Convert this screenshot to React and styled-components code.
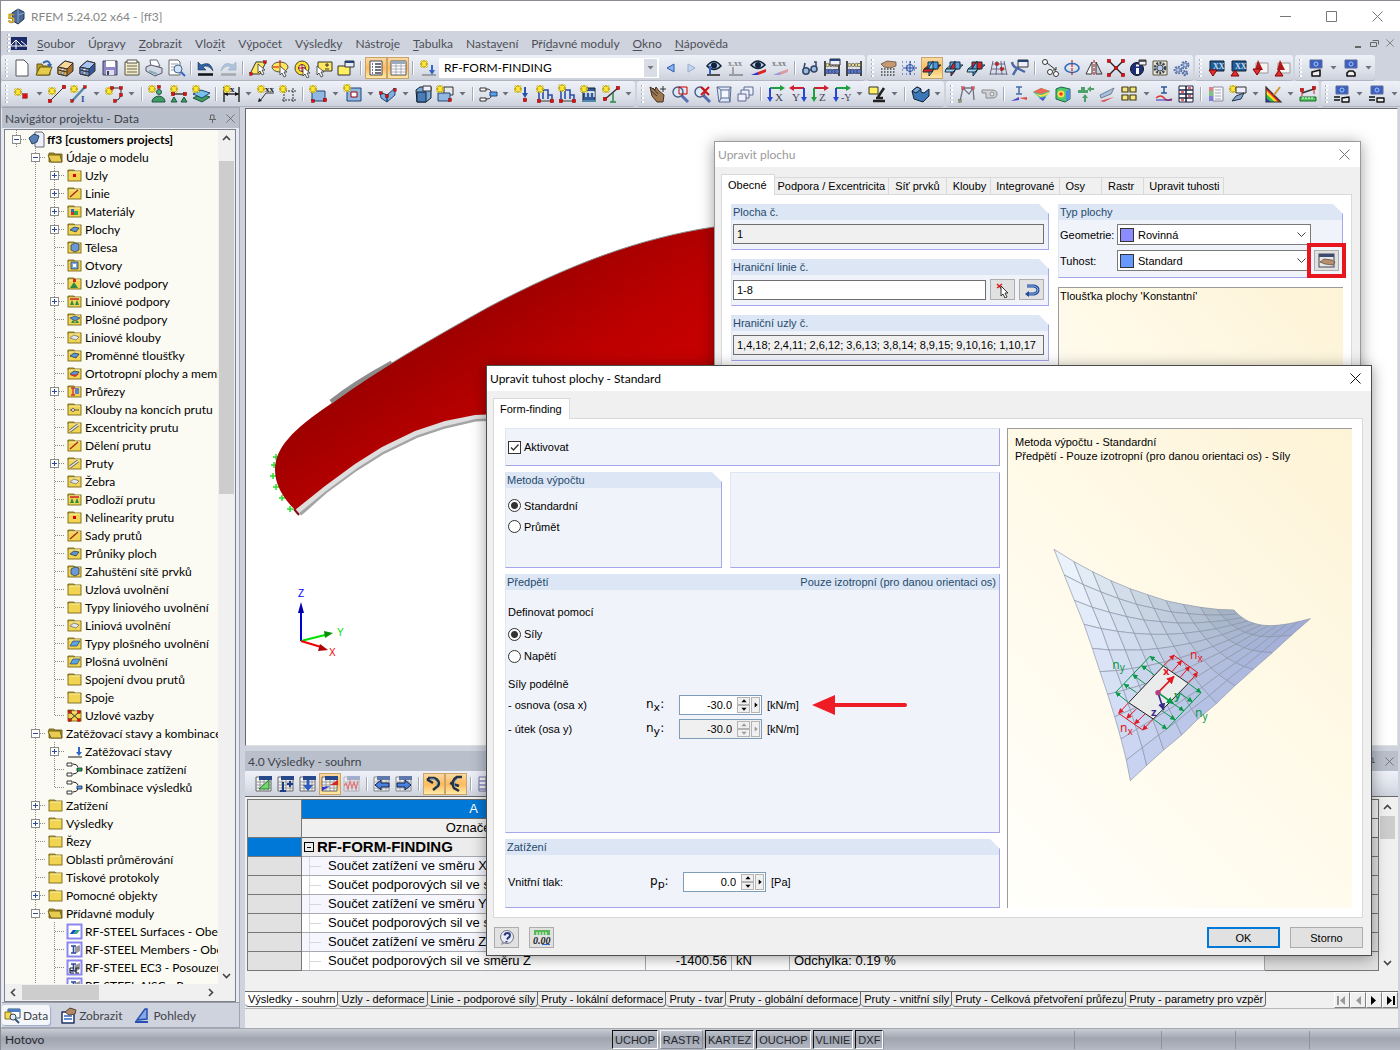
import React from "react";
import styled, { createGlobalStyle, css } from "styled-components";

const uiFont = 'Lato, "Open Sans", sans-serif';
const dlgFont = '"Liberation Sans", Arial, sans-serif';

const Global = createGlobalStyle`
  * { box-sizing: border-box; }
  body { margin: 0; background: #cfd3dd; overflow: hidden; }
  button, input, select { font: inherit; color: inherit; margin: 0; padding: 0; border: 0; background: none; border-radius: 0; }
  svg { display: block; flex: none; }
`;

/* ---------- drawings ---------- */

const Star = ({ x = 5, y = 5 }) => (
  <g transform={`translate(${x} ${y})`}>
    <path d="M0-4V4M-4 0H4M-3-3L3 3M-3 3L3-3" stroke="#8a7a10" strokeWidth="2" />
    <path d="M0-4V4M-4 0H4M-3-3L3 3M-3 3L3-3" stroke="#ffe838" strokeWidth="1.2" />
  </g>
);
const Node = ({ x, y, c = "#e01010", s = 3.4 }) => (
  <rect x={x - s / 2} y={y - s / 2} width={s} height={s} fill={c} stroke="#600" strokeWidth=".4" />
);
const Line = ({ d, c = "#333", w = 1, dash }) => (
  <path d={d} stroke={c} strokeWidth={w} fill="none" strokeDasharray={dash} />
);
const Poly = ({ d, f, s = "#333", w = 1 }) => <path d={d} fill={f} stroke={s} strokeWidth={w} strokeLinejoin="round" />;
const Txt = ({ x, y, c = "#222", s = 9, children }) => (
  <text x={x} y={y} fontSize={s} fill={c} fontFamily="Liberation Serif, serif" fontWeight="bold">{children}</text>
);
const Lens = ({ x = 8, y = 8 }) => (
  <>
    <Line d={`M${x + 3} ${y + 3}l7 7`} c="#5570b0" w={3} />
    <circle cx={x} cy={y} r="5" fill="#d8ecfc" stroke="#4a5a80" strokeWidth="1.4" />
  </>
);
const Cursor = ({ x = 11, y = 8 }) => (
  <path transform={`translate(${x} ${y})`} d="M0 0v9l2-2 2 4 2-1-2-4h3z" fill="#fff" stroke="#333" strokeWidth=".8" />
);
const Plane = ({ a, b, c }) => (
  <>
    <Poly d="M2 11l5-4h12l-5 4z" f={a} s="#134" />
    <Poly d="M6 4h10v7H6z" f={c} s="#134" />
    <Poly d="M7 9l4-6v10l-4 5z" f={b} s="#134" />
    <Poly d="M2 11h10l-3 3H1z" f={a} s="#134" />
  </>
);
const Gear = ({ x, y, r = 4, c = "#5570a8" }) => (
  <>
    <circle cx={x} cy={y} r={r} fill="none" stroke={c} strokeWidth={r * 0.5} strokeDasharray="2 1.2" />
    <circle cx={x} cy={y} r={r * 0.62} fill="#b8c8e8" stroke={c} />
  </>
);
const Loads = ({ x = 4 }) => (
  <>
    <Line d={`M${x} 6h9v5h4v4M${x} 6v9M${x + 4} 6v9M${x + 9} 10v5`} c="#2c4fa8" w={1.6} />
    <Line d={`M${x - 1} 17h15`} c="#777" w={1.6} />
    <Node x={x} y={17} /><Node x={x + 13} y={17} />
  </>
);
const Axis = ({ h, v, l, s = 11 }) => (
  <>
    <Line d="M4 4h12" c={h} w={2} /><path d="M14 1l5 3-5 3z" fill={h} />
    <Line d="M4 4v11" c={v} w={2} /><path d="M1 13l3 5 3-5z" fill={v} />
    <text x={9} y={17} fontSize={s} fill="#445" fontFamily="Liberation Serif, serif">{l}</text>
  </>
);
const Screen = ({ a }) => (
  <>
    <Poly d="M4 2h12v8H4z" f="#3f5fc0" s="#5a6a98" />
    <circle cx="10" cy="6" r="2" fill="none" stroke="#9cf" />
    {a === 0 && <Poly d="M6 18v-4l8-2v6z" f="#eee" s="#111" w={1.6} />}
    {a === 1 && <Poly d="M6 18v-3l2-2h4l2 2v3z" f="#eee" s="#111" w={1.6} />}
    {a === 2 && <><Line d="M2 13h6M2 16h6" c="#111" w={1.4} /><Poly d="M10 18v-4l7-1v5z" f="#eee" s="#111" w={1.4} /></>}
    {a === 3 && <><Line d="M2 13h6M2 16h6" c="#111" w={1.4} /><Poly d="M10 18v-4h7v4z" f="#eee" s="#111" w={1.4} /></>}
  </>
);
const GridBase = ({ o = 1 }) => (
  <g opacity={o}>
    <Poly d="M2 3h15v14H2z" f="#f4f4f4" s="#666" />
    <Line d="M2 8h15M2 11h15M2 14h15M6 6v11M10 6v11M14 6v11" c="#888" w={0.8} />
    <path d="M5 2h13v4H5z" fill="#28488c" />
  </g>
);
const Abacus = () => (
  <>
    <Line d="M3 3v15M17 3v15" c="#222" w={1.6} />
    <Line d="M3 7h14M3 13h14" c="#555" />
    {[5.5, 9, 12.5, 15].map((x) => <circle key={x} cx={x} cy="7" r="1.7" fill="#e8d898" stroke="#443" strokeWidth=".6" />)}
    {[5.5, 8.5, 12, 15].map((x) => <circle key={x} cx={x} cy="13.5" r="2.2" fill="#5878c8" stroke="#224" strokeWidth=".6" />)}
  </>
);
const Drawer = ({ f, d, t }) => (
  <>
    <Poly d="M2 9l7-6 8 2v8l-6 5-9-2z" f={d} />
    <Poly d="M2 9l7-6 8 2-6 6z" f={t} />
    <Poly d="M2 9l9 2v7l-9-2z" f={f} />
    <Line d="M2 12l9 2" />
    <path d="M5 10.500h3v2H5zM5 14h3v2H5z" fill="#fff" stroke="#333" strokeWidth=".6" />
  </>
);

const icons = {
  novy: <Poly d="M4 2h8l4 4v12H4z" f="#fff" s="#555" />,
  otevrit: <><Poly d="M3 17V6h5l1 2h7v9z" f="#b89a28" s="#6b5a10" /><Poly d="M2 17l4-8h12l-3 8z" f="#e4cc4c" s="#6b5a10" /><Line d="M9 5q5-4 7 1" c="#3a66b0" w={2} /><path d="M13 6h5l-2 4z" fill="#3a66b0" /></>,
  projekty: <Drawer f="#e8b050" d="#a87028" t="#f8d898" />,
  bloky: <Drawer f="#6c90dc" d="#34549c" t="#a8c4f4" />,
  ulozit: <><Poly d="M3 3h14v14H3z" f="#8f88c8" s="#445" /><path d="M6 3h9v6H6z" fill="#fff" /><path d="M6 12h8v5H6z" fill="#dde" /><path d="M7 13h2v4H7z" fill="#445" /></>,
  protokol: <><Poly d="M3 4h14v13H3z" f="#f4ecc8" s="#554" /><Poly d="M5 2h10v3H5z" f="#fff" s="#554" /><Line d="M5 8h10M5 11h10M5 14h10" c="#665" /></>,
  tisk: <><Poly d="M6 2h7l3 6-9 1z" f="#fff" s="#667" /><Poly d="M2 9l5-2 11 3v5l-7 3-9-5z" f="#d4d8e4" s="#556" /><Line d="M5 13l8 3" c="#8ab" w={2} /></>,
  nahled: <><Poly d="M3 2h9l2 2v13H3z" f="#fff" s="#666" /><Line d="M5 6h7M5 9h5M5 12h5" c="#99a" /><circle cx="12" cy="11" r="4" fill="#cfe4fa" stroke="#468" /><Line d="M15 14l4 4" c="#36c" w={2} /></>,
  zpet: <><path d="M2 4v8h8L7 9q5-3 10 4Q15 2 5 7z" fill="#2c62a8" stroke="#123" strokeWidth=".5" /><Line d="M2 16.500h15" c="#111" w={2.5} /></>,
  vpred: <g opacity=".6"><path d="M18 4v8h-8l3-3Q8 6 3 13 5 2 15 7z" fill="#8ab0d8" stroke="#678" strokeWidth=".5" /><Line d="M3 16.500h15" c="#888" w={2.5} /></g>,
  vyberRovina: <><Poly d="M2 16L8 4h10l-6 12z" f="#ffe860" /><Node x={3} y={16} s={2.500} /><Node x={17} y={4} s={2.500} /><Cursor x={10} y={6} /></>,
  vyberElipsa: <><ellipse cx="10" cy="9" rx="8" ry="5" fill="#ffe860" stroke="#554" /><Line d="M3 9h6M10 2v6" c="#d00" /><Cursor x={10} y={8} /></>,
  vyberPrstenec: <><circle cx="10" cy="10" r="7" fill="#ffe030" stroke="#443" /><circle cx="10" cy="10" r="3.500" fill="#f6f6ee" stroke="#443" /><Line d="M10 6v8M6 10h8" c="#d00" /><Cursor x={11} y={9} /></>,
  vyberPlus: <><Poly d="M4 4h14v9H4z" f="#ffe860" /><Line d="M11 7h4M13 5v4M11 11h4" /><Cursor x={3} y={8} /></>,
  poznamka: <><Poly d="M2 8h12v9H2z" f="#fff060" /><Poly d="M9 3h9v6H9z" f="#e8ecf8" /><Line d="M9 4h9" c="#247" w={2} /></>,
  navigator: <><Poly d="M4 3h12v14H4z" f="#fff" s="#445" /><Line d="M6 6h1M6 9h1M6 12h1M6 15h1M9 6h6M9 9h6M9 12h6M9 15h6" c="#445" w={1.3} /></>,
  tabulky: <><Poly d="M3 3h15v14H3z" f="#fff" s="#556" /><path d="M3 3h15v3H3z" fill="#9ab" /><Line d="M3 8h15M3 11h15M3 14h15M8 6v11M13 6v11" c="#99a" w={0.8} /></>,
  zatStav: <><Star x={6} y={6} /><Line d="M14 7v8" c="#36c" w={2} /><path d="M11 12l3 5 3-5z" fill="#36c" /><Line d="M4 17h14" c="#888" w={1.4} /></>,
  predchozi: <Poly d="M14 6v8L7 10z" f="#88b4f0" s="#2c5cb0" />,
  dalsi: <g opacity=".65"><Poly d="M6 6v8l7-4z" f="#b8d0f0" s="#6c90c8" /></g>,
  okoZatizeni: <><path d="M3 8q7-9 14 0-7 7-14 0z" fill="#bcd" stroke="#123" strokeWidth="1.5" /><circle cx="10" cy="7.500" r="3" fill="#124" /><Line d="M6 8v8" c="#36c" w={2} /><Line d="M3 17h13" c="#222" w={1.5} /></>,
  hodnoty: <g opacity=".5"><Txt x={2} y={8} s={8}>x.xx</Txt><Line d="M7 9v7M3 17h14" w={1.4} /></g>,
  okoPrubeh: <><path d="M3 7q7-8 14 0-7 7-14 0z" fill="#bcd" stroke="#123" strokeWidth="1.5" /><circle cx="10" cy="7" r="3" fill="#124" /><path d="M3 17l7-3v3z" fill="#33c" /><path d="M10 17v-3l8-3v3z" fill="#d22" /></>,
  hodPrubeh: <g opacity=".55"><Txt x={2} y={8} s={8}>x.xx</Txt><path d="M3 17l7-3v3z" fill="#66c" /><path d="M10 17v-3l8-3v3z" fill="#d66" /></g>,
  bryle: <><circle cx="6" cy="13" r="3.200" fill="#9bd" stroke="#346" strokeWidth="1.500" /><circle cx="14" cy="11" r="3" fill="#9bd" stroke="#346" strokeWidth="1.500" /><Line d="M4 10L5 5M16 9V4h-2M9 12h2" c="#346" w={1.500} /></>,
  pocitadloDlg: <><Abacus /><Poly d="M8 1h10v6H8z" f="#eef" /><Line d="M8 2h10" c="#247" w={2} /></>,
  pocitadlo: <Abacus />,
  ruka: <><path d="M3 6l6-3 9 1v4l-6 2-6-1z" fill="#c89870" stroke="#543" strokeWidth=".7" /><Line d="M3 11h15M3 14h15M3 17h15" w={1.400} dash="1.500 1.500" c="#444" /></>,
  rastr: <><Line d="M2 4h16M2 8h16M2 12h16M2 16h16" c="#2a4a9a" w={1.200} dash="1 3" /><circle cx="10" cy="10" r="3.500" fill="#c8d8f8" stroke="#2a4a9a" /><Line d="M10 3v14M3 10h14" c="#2a4a9a" /></>,
  rovinaXY: <Plane a="#e02020" b="#88c0ec" c="#4c94d8" />,
  rovinaYZ: <Plane a="#a8d0f0" b="#e02020" c="#5c9cd8" />,
  rovinaXZ: <Plane a="#a8d0f0" b="#5c9cd8" c="#e02020" />,
  pudorys: <><Line d="M5 3L2 17M9 3l-1 14M13 3l1 14M16 3l3 14M4 6h13M3 11h14M2 16h17" c="#668" /><Node x={9} y={6} s={2.500} /><Node x={14} y={11} s={2.500} /></>,
  nastrojDlg: <><Line d="M2 4q1 5 5 6l-4 7M7 10l8 4" c="#4a6aa8" w={2.500} /><Poly d="M8 2h10v7H8z" f="#eef" /><Line d="M8 3h10" c="#247" w={2} /></>,
  posun: <><circle cx="5" cy="4" r="2.500" fill="#fff" stroke="#333" /><circle cx="10" cy="14" r="2.500" fill="#fff" stroke="#333" /><circle cx="16" cy="16" r="2.500" fill="#fff" stroke="#333" /><Line d="M7 5l9 7M13 12h3V9" /></>,
  rotace: <><ellipse cx="10" cy="10" rx="7" ry="4.500" fill="none" stroke="#2c6cb8" strokeWidth="1.600" /><Line d="M10 2v16" c="#c00" dash="3 1" /></>,
  zrcadlo: <><Poly d="M8 4v12H2z" f="#fff" /><Poly d="M12 4v12h6z" f="#ccd" /><Line d="M10 2v16" c="#c00" dash="3 1" /></>,
  spojit: <><Line d="M3 3l14 14M17 3L3 17" c="#222" w={1.400} /><Node x={3} y={3} /><Node x={17} y={3} /><Node x={3} y={17} /><Node x={17} y={17} /><Node x={10} y={10} /></>,
  info: <><circle cx="9" cy="11" r="6.500" fill="#1c3078" stroke="#112" /><path d="M8 10h3v6H8zM8 6.500h3v2H8z" fill="#fff" /><Poly d="M11 2h7v5h-7z" f="#eef" /><Line d="M11 3h7" w={1.500} /></>,
  ozubene: <><Poly d="M3 3h14v14H3z" f="#f0e6d0" s="#554" /><Gear x={10} y={10} r={5} c="#345" /></>,
  kolecka: <><Gear x={6} y={12} r={3.500} /><Gear x={13} y={7} r={3.500} /><Gear x={13} y={15} r={2.500} /></>,
  modulDolu: <><Poly d="M4 3h14v10H4z" f="#1e5c98" s="#123" /><Txt x={7} y={11} s={8} c="#cde">XX</Txt><path d="M3 12h8l-4 6z" fill="#e03030" stroke="#800" /></>,
  modulNahoru: <><Poly d="M4 3h14v10H4z" f="#1e5c98" s="#123" /><Txt x={7} y={11} s={8} c="#cde">XX</Txt><path d="M3 18h8l-4-6z" fill="#e03030" stroke="#800" /></>,
  stranaDolu: <><Poly d="M6 5h12v10H6z" f="#f4f4f4" s="#999" /><path d="M8 2l5 10H5z" fill="#b01818" /><path d="M3 11h8l-4 6z" fill="#e03030" stroke="#800" /></>,
  stranaNahoru: <><Poly d="M6 5h12v10H6z" f="#f4f4f4" s="#999" /><path d="M8 2l5 10H5z" fill="#b01818" /><path d="M3 18h8l-4-6z" fill="#e03030" stroke="#800" /></>,
  obr0: <Screen a={0} />, obr1: <Screen a={1} />, obr2: <Screen a={2} />, obr3: <Screen a={3} />,
  uzel: <><Star x={6} y={8} /><Node x={13} y={12} s={4.500} /></>,
  linie: <><Line d="M3 17L17 3" /><Star x={5} y={7} /><Node x={3} y={17} /><Node x={17} y={3} /></>,
  prut: <><Line d="M3 17L16 3" c="#58a" w={2.500} /><Star x={5} y={5} /><Txt x={12} y={18} s={9} c="#2a4a9a">I</Txt><Node x={3} y={17} s={2.500} /><Node x={16} y={3} s={2.500} /></>,
  lomena: <><Line d="M8 4h9v7q-1 5-6 6" /><Star x={5} y={7} /><Node x={8} y={4} s={3} /><Node x={17} y={4} s={3} /><Node x={17} y={11} s={3} /><Node x={11} y={17} s={3} /></>,
  podpora: <><Star x={5} y={5} /><circle cx="12" cy="8" r="2.500" fill="#5a8" stroke="#254" /><Node x={12} y={3} s={3} /><path d="M5 18q0-5 7-6 6 1 6 6z" fill="#3f9c60" stroke="#254" /></>,
  podporaLinie: <><Star x={5} y={5} /><Line d="M3 10h14" w={1.400} /><Node x={4} y={10} /><Node x={16} y={10} /><path d="M2 18l3-5 3 5zM12 18l3-5 3 5z" fill="#3f9c60" stroke="#254" /></>,
  podporaPlocha: <><Poly d="M2 14l8-4 9 3-8 5z" f="#3f9c60" s="#254" /><Poly d="M2 10l8-4 9 3-8 5z" f="#78c0ec" s="#247" /><Star x={5} y={5} /></>,
  kota: <><Line d="M3 3v15M18 3v15M3 10h15" w={1.500} /><path d="M3 10l4-2v4zM18 10l-4-2v4z" fill="#111" /><Star x={6} y={5} /><Txt x={9} y={8}>x</Txt></>,
  kotaText: <><Star x={5} y={5} /><Txt x={9} y={8}>xx</Txt><Line d="M18 9H10L4 17" /><path d="M2 18l1-4 3 3z" fill="#222" /></>,
  ramecek: <><Line d="M4 7h14M4 16h14M6 4v14M15 4v14" dash="2 1" /><Star x={5} y={5} /></>,
  plocha: <><Poly d="M4 7h13v10H4z" f="#90b8e0" s="#247" /><Star x={5} y={5} /><Node x={17} y={16} /><Node x={5} y={17} s={3} /></>,
  otvor: <><Poly d="M4 4h14v13H4z" f="#90b8e0" s="#247" /><Poly d="M8 8h6v5H8z" f="#fff" s="#900" /><Star x={4} y={4} /></>,
  kridlo: <><Poly d="M2 8l7 3v7l-6-4zM9 11l8-7v7l-8 7z" f="#80b0dc" s="#247" /><Node x={9} y={12} s={3} /><Node x={3} y={9} s={2.500} /><Node x={17} y={6} s={2.500} /></>,
  teleso: <><Poly d="M3 6l4-3h11v11l-5 4H4z" f="#78a8d8" s="#123" /><Poly d="M4 8h9v10H4z" f="#4c7cb8" s="#123" /><Poly d="M10 2h8v5h-8z" f="#eef" /></>,
  telesa: <><Poly d="M9 3h9v8H9z" f="#e8e8e8" /><Poly d="M3 9h12v8H3z" f="#90b8e0" s="#247" /><Star x={5} y={5} /><Node x={15} y={16} s={3} /></>,
  kombinace: <><Poly d="M2 4h6v3H2zM2 14h6v3H2z" f="#fff" /><Line d="M8 5q5 0 5 3M8 15q5 0 5-3" /><Poly d="M12 8h7v4h-7z" f="#58a0f0" s="#247" /></>,
  zatUzel: <><Star x={5} y={5} /><Line d="M12 3v9" c="#2c4fa8" w={2} /><path d="M9 9l3 5 3-5z" fill="#2c4fa8" /><Node x={12} y={16} /></>,
  zatLinie: <><Loads /><Star x={5} y={5} /></>,
  zatPrut: <><Loads /><Star x={5} y={4} /></>,
  zatPlocha: <><Poly d="M4 4h12v13H4z" f="#345a9a" s="#123" /><Line d="M6 8h9v5M7 8v5M11 8v5" c="#fff" w={1.300} /><Star x={5} y={5} /><path d="M3 16h14v2H3z" fill="#58a" /></>,
  zatVolne: <><Line d="M3 16L17 4" w={1.500} /><Star x={5} y={5} /><Node x={17} y={4} /><Node x={4} y={15} /><Line d="M12 9v9M9 18h6" c="#2a8a40" w={1.500} /></>,
  posunPohledu: <><path d="M2 3l5 3 1-3 3 4 5 4-1 7-6 0-5-6z" fill="#a07850" stroke="#432" /><Line d="M15 2v6M12 5h6M5 4l5 6M3 7l6 5" /></>,
  zoomOkno: <><Lens /><Poly d="M9 3h8v7H9z" f="none" s="#c00" /></>,
  zoomX: <><Lens /><Line d="M9 3l8 8M17 3L9 11" c="#d01010" w={2} /></>,
  krychle: <><Poly d="M3 3h14l-1 15H5z" f="#dfe8f6" s="#5a6a90" /><Poly d="M7 6h8v8H7z" f="#f4f8ff" s="#5a6a90" /><Line d="M3 3l4 3M17 3l-2 3M5 18l2-4M16 18l-1-4" c="#5a6a90" /></>,
  krychle2: <><Poly d="M8 3h9v8H8z" f="#eef" s="#5a6a90" /><Poly d="M5 6h8v8H5z" f="#eef" s="#5a6a90" /><Poly d="M2 10h8v7H2z" f="#eef" s="#5a6a90" /></>,
  osaX: <Axis h="#20a040" v="#2848d0" l="X" />,
  osaY: <><Line d="M4 4h12" c="#d02030" w={2} /><path d="M6 1L1 4l5 3z" fill="#d02030" /><Line d="M16 4v11" c="#2848d0" w={2} /><path d="M13 13l3 5 3-5z" fill="#2848d0" /><text x={4} y={17} fontSize={11} fill="#445" fontFamily="Liberation Serif, serif">Y</text></>,
  osaZ: <Axis h="#d02030" v="#20a040" l="Z" />, osaMY: <Axis h="#20a040" v="#2848d0" l="-Y" s={10} />,
  pohled: <><Poly d="M2 3h9v7H2z" f="#fff060" /><Line d="M17 4l-6 9M6 17h12M9 14h7" c="#222" w={2.500} /></>,
  izo: <><Poly d="M2 7l5-4 4 2v3l3 1 5-4v7l-6 6-9-3z" f="#3c78b8" s="#123" /><Poly d="M2 7l5-4 4 2-5 4z" f="#78a8dc" s="#123" /></>,
  ram: <g opacity=".7"><Line d="M3 17L6 4h10l1 12M6 4l6 6 4-6" c="#445" w={1.300} /><Node x={6} y={4} s={2.500} /><Node x={16} y={4} s={2.500} /><Node x={3} y={17} s={2.500} c="#3a3" /></g>,
  kamera: <g opacity=".7"><Poly d="M3 6h10q5 0 5 4t-5 4H7V9H3z" f="#ccc" s="#666" /><circle cx="13" cy="10" r="2" fill="#eee" stroke="#666" /></g>,
  profilPrubeh: <g opacity=".85"><Line d="M7 3h6M10 3v7M7 10h6" c="#2a5a9a" w={1.500} /><path d="M2 17l8-4v3z" fill="#33b" /><path d="M10 14l8-1v3z" fill="#d33" /></g>,
  plochaBarvy: <><path d="M2 8l8-4 9 3-7 10z" fill="#4c8" /><path d="M2 8l8-4 9 3-9 3z" fill="#e65" /><path d="M4 10l7 1 7-3-2 3-6 2z" fill="#fd4" /><path d="M8 14l7-1-3 4z" fill="#55d" /></>,
  telesoBarvy: <><Poly d="M3 5l5-2 9 2v10l-5 3-9-3z" f="#4cc870" s="#264" /><circle cx="8" cy="10" r="3.500" fill="#fd4" /><circle cx="8" cy="10" r="1.700" fill="#e33" /><path d="M13 7l4-2v10l-4 2z" fill="#4a8ae0" /></>,
  reakce: <g opacity=".8"><path d="M6 3h4v3h3v3H3V6h3z" fill="#2a9048" /><path d="M10 10l3 4h-2v4H9v-4H7z" fill="#2a9048" /><path d="M12 5l4-3v2h3v2h-3v2z" fill="#2a9048" /></g>,
  prubehy: <g opacity=".8"><path d="M3 11l14-7-3 6-10 4z" fill="#9ab8e0" stroke="#567" /><path d="M3 17l14-4-10 5z" fill="#d33" /></g>,
  dlazdice: <>{[[3, 3], [11, 3], [3, 11], [11, 11]].map(([x, y]) => <Poly key={`${x}${y}`} d={`M${x} ${y}h6v5h-6z`} f="#f4e680" s="#443a10" w={1.200} />)}</>,
  profilVlna: <><Line d="M7 3h6M10 3v6M7 9h6" c="#2a5a9a" w={1.500} /><Line d="M2 14q5-4 8 0t8 1" c="#d33" w={1.500} /><Line d="M2 16h16" c="#33b" /></>,
  tabHodnot: <><Poly d="M3 2h14v16H3z" f="#fff" s="#224" /><Line d="M3 6h14M3 10h14M3 14h14M10 2v16" c="#224" w={1.600} /><Line d="M5 8h3M12 4h3M12 12h3M5 16h3" c="#d33" w={1.500} /></>,
  legenda: <g opacity=".8"><Poly d="M7 3h10v14H7z" f="#fff" s="#778" /><Line d="M9 6h6M9 9h6M9 12h6M9 15h6" c="#99a" /><path d="M3 3h4v4H3z" fill="#d66" /><path d="M3 7h4v5H3z" fill="#6b6" /><path d="M3 12h4v5H3z" fill="#66d" /></g>,
  pero: <><Star x={5} y={5} /><Poly d="M8 3h10v6H8z" f="#eef" /><Poly d="M4 17l4-5 8-3-3 6z" f="#88a8d0" s="#234" /></>,
  duha: <><path d="M3 3v15h15z" fill="#e22" /><path d="M3 6v12h12z" fill="#fd2" /><path d="M3 10v8h9z" fill="#3b4" /><path d="M3 14v4h5z" fill="#33d" /><Line d="M3 3v15h15z" w={1.200} /><Line d="M17 3l-6 8" c="#c93" w={2} /></>,
  pravitko: <><Line d="M4 9l12-4" w={1.400} /><Node x={4} y={6} /><Node x={16} y={4} /><Line d="M4 6v6M16 4v6" c="#c22" /><Poly d="M2 13h16v4H2z" f="#50c860" s="#1a6a28" /><Line d="M5 13v2M8 13v2M11 13v2M14 13v2" c="#fff" /></>,
  tUprava: <><GridBase /><Poly d="M5 15L15 6v9z" f="#70d870" s="#2a7a30" /></>,
  tRadky: <><GridBase /><Line d="M7 8v8M11 10h6M14 7v6M4 17h6" c="#1c3c88" w={2} /></>,
  tDolu: <><GridBase /><Line d="M10 6v7" c="#2c5cc0" w={3} /><path d="M5 11h10l-5 6z" fill="#2c5cc0" /></>,
  tPrubeh: <><GridBase /><path d="M2 17v-4l8-1z" fill="#33c" /><path d="M10 11l8-5v5z" fill="#d22" /></>,
  tKmity: <g opacity=".6"><GridBase o={0.6} /><Line d="M2 12l2-3 2 6 2-8 2 7 2-6 2 7 2-8" c="#d33" w={1.200} /></g>,
  tVlevo: <><GridBase o={0.7} /><path d="M3 11l6-5v3h8v4H9v3z" fill="#4c80e0" stroke="#124" /></>,
  tVpravo: <><GridBase o={0.7} /><path d="M17 11l-6-5v3H3v4h8v3z" fill="#4c80e0" stroke="#124" /></>,
  tOblouk1: <><Line d="M4 4h6q7 3 4 8l-5 4M4 4v2l5 3" c="#234" w={2.600} /><Line d="M6 5h4q5 3 2 7" c="#78a8e0" /></>,
  tOblouk2: <><Line d="M16 3h-5Q4 7 8 14l5 3M4 9l9 3" c="#234" w={2.600} /><Line d="M12 4Q7 8 9 13" c="#78a8e0" /></>,
  tSloupce: <g opacity=".7"><Poly d="M3 3h14v14H3z" f="#fff" s="#448" /><Line d="M3 7h14M3 11h14M3 15h14M10 3v14" c="#66a" w={1.400} /></g>,
};

const Icon = ({ name, size = 20 }) => (
  <svg width={size} height={size} viewBox="0 0 20 20" fill="none" aria-hidden="true">{icons[name]}</svg>
);

const Cross = ({ size = 11, color = "#111" }) => (
  <svg width={size} height={size} viewBox="0 0 11 11" aria-hidden="true"><path d="M.5.5l10 10M10.500.5l-10 10" stroke={color} /></svg>
);
const Pin = () => (
  <svg width="9" height="9" viewBox="0 0 9 9" aria-hidden="true"><path d="M2.500 1v4M6 1v4M2.500 1H6M1 5.500h7M4.500 6v3" stroke="#666" fill="none" /></svg>
);
const turn = { down: 0, left: 90, up: 180, right: 270 };
const Chevron = ({ dir = "down", color = "#444", size = 9 }) => (
  <svg width={size} height={size} viewBox="0 0 9 9" aria-hidden="true">
    <path transform={`rotate(${turn[dir]} 4.500 4.500)`} d="M1 3l3.500 3.500L8 3" stroke={color} strokeWidth="1.600" fill="none" />
  </svg>
);
const ThinChevron = () => (
  <svg width="9" height="9" viewBox="0 0 9 9" aria-hidden="true"><path d="M.5 2.500l4 4 4-4" stroke="#444" fill="none" /></svg>
);
const Tri = ({ dir = "down", color = "#000", size = 7 }) => (
  <svg width={size} height={size} viewBox="0 0 7 7" aria-hidden="true">
    <path transform={`rotate(${turn[dir]} 3.500 3.500)`} d="M.5 2h6l-3 3.500z" fill={color} />
  </svg>
);
const SheetArrow = ({ back, end, color = "#000" }) => (
  <svg width="10" height="9" viewBox="0 0 10 9" aria-hidden="true">
    <g transform={back ? "matrix(-1 0 0 1 10 0)" : undefined} fill={color}>
      <path d="M2 0l5 4.500L2 9z" />{end && <path d="M8 0h2v9H8z" />}
    </g>
  </svg>
);

/* ---------- frame ---------- */

const Frame = styled.div`
  position: relative;
  display: flex;
  flex-direction: column;
  height: 100vh;
  border-left: 1px solid #8b8b93;
  background: #cfd3dd;
  font-family: ${uiFont};
  font-size: 12px;
  color: #3c3f46;
  overflow: hidden;
`;
const TitleBar = styled.header`
  display: flex;
  align-items: center;
  flex: 0 0 31px;
  padding-left: 7px;
  background: #fff;
  border-top: 1px solid #8b8b93;
  color: #868686;
`;
const TitleText = styled.span`padding-left: 6px;`;
const Spacer = styled.span`flex: 1;`;
const WinButton = styled.button`
  display: flex;
  align-items: center;
  justify-content: center;
  width: 46px;
  height: 30px;
`;
const MenuBar = styled.nav`
  display: flex;
  align-items: center;
  flex: 0 0 24px;
  padding: 0 2px;
  white-space: nowrap;
`;
const MenuLogo = styled.span`padding-right: 3px;`;
const MenuItem = styled.button`
  padding: 0 6px 0 7px;
  color: #4c4f58;
  u { text-underline-offset: 2px; }
`;
const MdiButton = styled.button`
  display: flex;
  justify-content: center;
  width: 16px;
`;
const Grip = styled.span`
  flex: 0 0 ${(p) => p.$w || 10}px;
  height: 18px;
  background: repeating-linear-gradient(#fff 0 2px, transparent 2px 4px) 5px 0 / 2px 100% no-repeat,
    repeating-linear-gradient(#a9afbb 0 2px, transparent 2px 4px) 4px 0 / 2px 100% no-repeat;
`;
const ToolRow = styled.div`
  display: flex;
  flex: 0 0 26px;
  gap: 2px;
  overflow: hidden;
`;
const ToolGroup = styled.div`
  display: flex;
  align-items: center;
  height: 26px;
  border-radius: 3px;
  border-bottom: 1px solid #b0b5c1;
  background: linear-gradient(#eef1f8, #dde1ea 60%, #cdd1db);
`;
const ToolButton = styled.button`
  display: flex;
  align-items: center;
  justify-content: center;
  width: 22px;
  height: 22px;
  ${(p) => p.$on && css`
    border: 1px solid #c8a468;
    background: linear-gradient(#fbd9a4, #fdbb5c 50%, #ffe9a8);
  `}
`;
const DropButton = styled.button`
  display: flex;
  align-items: center;
  justify-content: center;
  width: 13px;
  height: 22px;
`;
const Divider = styled.span`
  width: 8px;
  height: 14px;
  background: linear-gradient(90deg, #a4a9b5 1px, #fff 1px) 3px 0 / 2px 100% no-repeat;
`;
const ComboBox = styled.span`
  display: flex;
  align-items: center;
  width: 220px;
  height: 20px;
  padding: 0 2px 0 5px;
  background: #fff;
  color: #000;
`;
const BareSelect = styled.select`
  flex: 1;
  min-width: 0;
  height: 100%;
  appearance: none;
  outline: none;
`;
const ComboArrow = styled.span`
  display: flex;
  align-items: center;
  justify-content: center;
  width: 13px;
  height: 18px;
  background: #d9dde6;
`;

const row1 = [
  "novy otevrit projekty bloky ulozit protokol tisk nahled | zpet vpred | vyberRovina vyberElipsa vyberPrstenec vyberPlus poznamka | *navigator *tabulky | zatStav COMBO predchozi dalsi okoZatizeni hodnoty okoPrubeh hodPrubeh | bryle pocitadloDlg pocitadlo",
  "ruka rastr *rovinaXY rovinaYZ rovinaXZ pudorys nastrojDlg | posun rotace zrcadlo spojit info ozubene kolecka",
  "modulDolu modulNahoru stranaDolu stranaNahoru",
  "obr0 v obr1 v",
];
const row2 = [
  "uzel v linie prut v lomena v | podpora podporaLinie podporaPlocha | kota v kotaText ramecek | plocha v otvor v kridlo v teleso telesa v | kombinace v zatUzel zatLinie zatPrut zatPlocha zatVolne v",
  "posunPohledu zoomOkno zoomX krychle krychle2 | osaX osaY osaZ osaMY v pohled v | izo v",
  "ram kamera | profilPrubeh plochaBarvy telesoBarvy reakce prubehy dlazdice v profilVlna tabHodnot | legenda pero v duha v pravitko",
  "obr2 v obr3 v",
];

function Tools({ items }) {
  return items.split(" ").map((t, i) => {
    if (t === "|") return <Divider key={i} />;
    if (t === "v") return <DropButton key={i} aria-label="Rozbalit"><Tri color="#6c7078" /></DropButton>;
    if (t === "COMBO")
      return (
        <ComboBox key={i}>
          <BareSelect aria-label="Zatěžovací stav"><option>RF-FORM-FINDING</option></BareSelect>
          <ComboArrow><Tri color="#777" /></ComboArrow>
        </ComboBox>
      );
    const on = t[0] === "*";
    const name = on ? t.slice(1) : t;
    return <ToolButton key={i} $on={on} aria-label={name}><Icon name={name} /></ToolButton>;
  });
}
const Toolbar = ({ groups }) => (
  <ToolRow>{groups.map((g, i) => <ToolGroup key={i}><Grip /><Tools items={g} /></ToolGroup>)}</ToolRow>
);

/* ---------- navigator ---------- */

const Workspace = styled.main`
  display: flex;
  flex: 1;
  min-height: 0;
  gap: 5px;
  padding-right: 2px;
`;
const Navigator = styled.aside`
  display: flex;
  flex-direction: column;
  flex: 0 0 239px;
  min-width: 0;
  min-height: 0;
  border: 1px solid #a0a5b1;
  border-left-color: #e4e7ef;
  background: #e8ebf3;
`;
const PanelHeader = styled.div`
  display: flex;
  align-items: center;
  gap: 9px;
  flex: 0 0 20px;
  padding: 0 4px 0 3px;
  background: #b9c0cb;
  color: #3f434b;
`;
const TreeBox = styled.div`
  display: flex;
  flex-direction: column;
  flex: 1;
  min-height: 0;
  margin: 1px 3px 0 2px;
  border: 1px solid #7d818c;
`;
const TreeRow = styled.div`display: flex; flex: 1; min-height: 0;`;
const Tree = styled.ul`
  flex: 1;
  min-width: 0;
  margin: 0;
  padding: 0 0 0 2px;
  list-style: none;
  background: #fcfbf3;
  color: #000;
  overflow: hidden;
`;
const Item = styled.li`
  display: flex;
  align-items: center;
  height: 18px;
  white-space: nowrap;
  font-weight: ${(p) => (p.$bold ? 700 : 400)};
`;
const dotsV = "repeating-linear-gradient(#8a8a8a 0 1px, transparent 1px 2px)";
const dotsH = "repeating-linear-gradient(90deg, #8a8a8a 0 1px, transparent 1px 2px)";
const Guide = styled.span`
  display: flex;
  align-items: center;
  justify-content: center;
  flex: 0 0 19px;
  height: 18px;
  ${(p) => p.$kind === "through" && css`background: ${dotsV} 9px 0 / 1px 100% no-repeat;`}
  ${(p) => p.$kind === "tee" && css`background: ${dotsV} 9px 0 / 1px 100% no-repeat, ${dotsH} 10px 9px / 9px 1px no-repeat;`}
  ${(p) => p.$kind === "last" && css`background: ${dotsV} 9px 0 / 1px 9px no-repeat, ${dotsH} 10px 9px / 9px 1px no-repeat;`}
`;
const Expander = styled.button`
  width: 9px;
  height: 9px;
  border: 1px solid #8c8c8c;
  background:
    linear-gradient(#2c4a9c, #2c4a9c) center / 5px 1px no-repeat,
    ${(p) => (p.$open ? "" : "linear-gradient(#2c4a9c, #2c4a9c) center / 1px 5px no-repeat,")}
    #fff;
`;
const ItemIcon = styled.span`
  display: flex;
  justify-content: center;
  flex: 0 0 21px;
`;

const marks = {
  dot: <rect x="7" y="7" width="3" height="3" fill="#d00" />,
  line: <><Line d="M4 12l8-7" c="#a22" w={1.300} /></>,
  mat: <><rect x="5" y="6" width="3" height="4" fill="#36c" /><rect x="8" y="8" width="4" height="4" fill="#3a4" /><rect x="5" y="9" width="3" height="3" fill="#c33" /></>,
  surf: <Poly d="M4 9l4-3 5 1-3 4z" f="#5a94d8" s="#234" w={0.700} />,
  solid: <Poly d="M5 6l4-2 4 1v6l-4 2-4-2z" f="#6a98d8" s="#234" w={0.700} />,
  open: <><Poly d="M5 5h7v7H5z" f="#7aa8e0" s="#234" w={0.700} /><rect x="7" y="7" width="3" height="3" fill="#fff" /></>,
  sup: <><rect x="7" y="4" width="3" height="3" fill="#d22" /><path d="M4 13l4-6 4 6z" fill="#2a8a48" /></>,
  lsup: <><Line d="M4 6h9" c="#c22" w={1.500} /><path d="M4 12l2-5 2 5zM9 12l2-5 2 5z" fill="#2a8a48" /></>,
  ssup: <><Poly d="M4 7l5-2 5 2-5 3z" f="#5a94d8" s="#234" w={0.600} /><path d="M5 12l2-3 2 3 2-3 2 3z" fill="#2a8a48" /></>,
  gray: <><Poly d="M4 9l4-3 5 2-3 3z" f="#e4e8f0" s="#667" w={0.700} /></>,
  ortho: <><Poly d="M4 9l4-3 5 1-3 4z" f="#5a94d8" s="#234" w={0.700} /><path d="M4 10l5 2 4-3z" fill="#d33" /></>,
  cross: <><Line d="M5 5h4M7 5v7M5 12h4" c="#c33" w={1.300} /><path d="M9 5h4v6H9z" fill="#5a80d8" /></>,
  tube: <><Line d="M4 12l8-6" c="#666" w={3} /><Line d="M4 12l8-6" c="#eee" w={1.400} /></>,
  hinge: <><Line d="M4 9h9" c="#555" /><circle cx="7" cy="9" r="1.500" fill="#fff" stroke="#333" strokeWidth=".7" /></>,
  rel: <Poly d="M4 11l3-5h7l-3 5z" f="#5ca4e8" s="#246" w={0.700} />,
  link: <><Line d="M4 5l9 8M13 5l-9 8" c="#333" /><Node x={4} y={5} s={2.500} /><Node x={13} y={5} s={2.500} /><Node x={4} y={13} s={2.500} /><Node x={13} y={13} s={2.500} /></>,
};
function TreeIcon({ kind }) {
  let body;
  if (kind === "root")
    body = <><Poly d="M7 1h7l2 2v13H7z" f="#eef" s="#667" /><Poly d="M1 7l5-4 5 2-2 6-5 2z" f="#5a80b8" s="#245" /></>;
  else if (kind === "openf")
    body = <><Poly d="M2 13V4h5l1 1h7v8z" f="#b89a28" s="#5c4c10" w={0.800} /><Poly d="M1 6h12l2 7H4z" f="#e8cc50" s="#5c4c10" w={0.800} /></>;
  else if (kind === "lc") body = <><Line d="M2 14h14" c="#666" w={1.500} /><Line d="M13 4v6" c="#36c" w={2} /><path d="M10 9l3 4 3-4z" fill="#36c" /></>;
  else if (kind === "co" || kind === "rc")
    body = <><Poly d="M1 2h5v3H1zM1 12h5v3H1z" f="#fff" s="#222" w={0.900} /><Line d="M7 3q4 0 5 3M7 13q4 0 5-3" c="#222" /><Poly d="M11 7h5v3h-5z" f={kind === "co" ? "#20b040" : "#58a0f0"} s="#124" w={0.800} /></>;
  else if (kind === "m0" || kind === "m1" || kind === "m2")
    body = <><rect x="1.500" y="1.500" width="14" height="14" fill="#fff" stroke="#8a86f4" strokeWidth="2" />{kind === "m0" ? <><path d="M4 11l3-4h7l-3 4z" fill="#3a8" /><path d="M4 11l3-4h3l-3 4z" fill="#24c" /></> : <><path d="M9 6l5-2v6l-5 3z" fill="#999" /><Line d="M5 5h5M7.500 5v7M5 12h5" c="#2a4a9a" w={1.600} />{kind === "m2" && <path d="M4 9h4M4 11.500h3M4 14h4M4 9v5M13 9h-3v5h3" stroke="#222" strokeWidth="1.200" />}</>}</>;
  if (!body)
    body = <><path d="M2 4.500V3h6l1 1.500z" fill="#e0c440" stroke="#6b5a10" strokeWidth=".8" /><rect x="2" y="4" width="13" height="10" fill="#f0d452" stroke="#7a6614" strokeWidth=".9" /><path d="M3 5h11" stroke="#fdf2a8" />{marks[kind]}</>;
  return <svg width="17" height="17" viewBox="0 0 17 17" fill="none" aria-hidden="true">{body}</svg>;
}

/* level, label, icon, expander state, last child */
const tree = [
  [0, "ff3 [customers projects]", "root", "-"],
  [1, "Údaje o modelu", "openf", "-"],
  [2, "Uzly", "dot", "+"], [2, "Linie", "line", "+"], [2, "Materiály", "mat", "+"], [2, "Plochy", "surf", "+"],
  [2, "Tělesa", "solid"], [2, "Otvory", "open"], [2, "Uzlové podpory", "sup"], [2, "Liniové podpory", "lsup", "+"],
  [2, "Plošné podpory", "ssup"], [2, "Liniové klouby", "gray"], [2, "Proměnné tloušťky", "surf"],
  [2, "Ortotropní plochy a membrány", "ortho"], [2, "Průřezy", "cross", "+"], [2, "Klouby na koncích prutu", "hinge"],
  [2, "Excentricity prutu", "tube"], [2, "Dělení prutu", "line"], [2, "Pruty", "tube", "+"], [2, "Žebra", "gray"],
  [2, "Podloží prutu", "lsup"], [2, "Nelinearity prutu", "dot"], [2, "Sady prutů", "line"], [2, "Průniky ploch", "surf"],
  [2, "Zahuštění sítě prvků", "solid"], [2, "Uzlová uvolnění", "f"], [2, "Typy liniového uvolnění", "f"],
  [2, "Liniová uvolnění", "gray"], [2, "Typy plošného uvolnění", "rel"], [2, "Plošná uvolnění", "rel"],
  [2, "Spojení dvou prutů", "f"], [2, "Spoje", "f"], [2, "Uzlové vazby", "link", "", 1],
  [1, "Zatěžovací stavy a kombinace", "openf", "-"],
  [2, "Zatěžovací stavy", "lc", "+"], [2, "Kombinace zatížení", "co"], [2, "Kombinace výsledků", "rc", "", 1],
  [1, "Zatížení", "f", "+"], [1, "Výsledky", "f", "+"], [1, "Řezy", "f"], [1, "Oblasti průměrování", "f"],
  [1, "Tiskové protokoly", "f"], [1, "Pomocné objekty", "f", "+"], [1, "Přídavné moduly", "openf", "-"],
  [2, "RF-STEEL Surfaces - Obecná", "m0"], [2, "RF-STEEL Members - Obecná", "m1"], [2, "RF-STEEL EC3 - Posouzení", "m2"],
  [2, "RF-STEEL AISC - Posouzení", "m1"],
];

const ScrollV = styled.div`
  display: flex;
  flex-direction: column;
  align-items: center;
  flex: 0 0 16px;
  background: #f0f0f0;
`;
const ScrollH = styled.div`
  display: flex;
  align-items: center;
  flex: 0 0 17px;
  padding-right: 16px;
  background: #f0f0f0;
`;
const ScrollButton = styled.button`
  display: flex;
  align-items: center;
  justify-content: center;
  width: 17px;
  height: 17px;
`;
const ThumbV = styled.span`
  width: 15px;
  margin-top: ${(p) => p.$gap || 0}px;
  flex: 0 0 ${(p) => p.$len};
  background: #cdcdcd;
`;
const ThumbH = styled.span`width: 77px; height: 15px; background: #cdcdcd;`;
const NavTabs = styled.div`
  display: flex;
  align-items: center;
  gap: 8px;
  flex: 0 0 25px;
  background: #cfd3dd;
  border-top: 1px solid #9a9eaa;
`;
const NavTab = styled.button`
  display: flex;
  align-items: center;
  gap: 2px;
  height: 20px;
  padding: 0 2px;
  border-radius: 3px;
  color: #3f434b;
  ${(p) => p.$on && css`background: #f4f6fa; box-shadow: 1px 1px 1px #9ac;`}
`;

function NavigatorPanel() {
  return (
    <Navigator>
      <PanelHeader>Navigátor projektu - Data<Spacer /><Pin /><Cross size={9} color="#666" /></PanelHeader>
      <TreeBox>
        <TreeRow>
          <Tree>
            {tree.map(([lv, label, icon, ex, last]) => (
              <Item key={label} $bold={lv === 0}>
                {lv > 0 && <Guide />}
                {lv > 1 && <Guide $kind="through" />}
                <Guide $kind={last ? "last" : "tee"}>
                  {ex && <Expander $open={ex === "-"} aria-label={label} />}
                </Guide>
                <ItemIcon><TreeIcon kind={icon} /></ItemIcon>
                {label}
              </Item>
            ))}
          </Tree>
          <ScrollV>
            <ScrollButton aria-label="Nahoru"><Chevron dir="up" /></ScrollButton>
            <ThumbV $gap={14} $len="39%" />
            <Spacer />
            <ScrollButton aria-label="Dolů"><Chevron /></ScrollButton>
          </ScrollV>
        </TreeRow>
        <ScrollH>
          <ScrollButton aria-label="Vlevo"><Chevron dir="left" /></ScrollButton>
          <ThumbH /><Spacer />
          <ScrollButton aria-label="Vpravo"><Chevron dir="right" /></ScrollButton>
        </ScrollH>
      </TreeBox>
      <NavTabs>
        <NavTab $on>
          <svg width="17" height="17" viewBox="0 0 17 17" fill="none"><Poly d="M4 2h12v9H4z" f="#fff" s="#357" /><path d="M4 2h12v3H4z" fill="#4c7cc8" /><Poly d="M1 5h6v7H1z" f="#f3da58" s="#8a7418" /><circle cx="9" cy="10" r="3" fill="#d8ecfc" stroke="#444" /><Line d="M11 12l4 4" c="#357" w={2} /></svg>
          Data
        </NavTab>
        <NavTab>
          <svg width="17" height="17" viewBox="0 0 17 17" fill="none"><Poly d="M2 5h12v11H2z" f="#fff" s="#236" w={1.500} /><Line d="M4 9h8M4 12h8" c="#36c" w={1.500} /><path d="M5 5l5-4 6 2-1 4-6 1z" fill="#b08868" stroke="#543" /></svg>
          Zobrazit
        </NavTab>
        <NavTab>
          <svg width="17" height="17" viewBox="0 0 17 17" fill="none"><path d="M1 15h13" stroke="#2850b0" strokeWidth="2" /><path d="M3 13L11 2h2v10z" stroke="#2850b0" strokeWidth="1.500" fill="#88a8e8" /></svg>
          Pohledy
        </NavTab>
      </NavTabs>
    </Navigator>
  );
}

/* ---------- model view ---------- */

const RightColumn = styled.section`
  display: flex;
  flex-direction: column;
  flex: 1;
  min-width: 0;
  gap: 5px;
`;
const View = styled.div`
  flex: 1;
  min-height: 0;
  margin-top: 1px;
  border: 1px solid #696969;
  border-right-color: #e0e0e0;
  border-bottom-color: #e0e0e0;
  background: #fff;
  overflow: hidden;
`;

function ModelView() {
  return (
    <View>
      <svg width="100%" height="100%" fill="none" aria-label="Model">
        <defs>
          <linearGradient id="skin" gradientUnits="userSpaceOnUse" x1="480" y1="300" x2="560" y2="420">
            <stop offset="0" stopColor="#9c0000" /><stop offset=".7" stopColor="#bc0000" /><stop offset="1" stopColor="#c40000" />
          </linearGradient>
        </defs>
        <g transform="translate(-246 -109)">
          <path d="M331 402Q355 383 392 363" stroke="#8c8c8c" strokeWidth="5" />
          {[[276, 457], [274, 465], [273, 476], [276, 487], [282, 498], [290, 509]].map(([x, y]) => (
            <path key={y} d={`M${x - 3} ${y}h6M${x} ${y - 3}v6`} stroke="#28e028" strokeWidth="1.500" />
          ))}
          <path d="M299 513L325 490 355 468 382 451 415 435 445 425 475 418 500 417" stroke="#a4a4a4" strokeWidth="7" />
          <path d="M297 511L325 488 355 466 382 449 415 433 445 423 475 416 500 415" stroke="#dedede" strokeWidth="6" />
          <path
            d="M295 510Q275 490 275 470C275 448 292 430 332 403C380 368 430 340 487 308C570 264 640 238 714 227H760V414H500L475 415L445 421 415 431 382 447 355 464 325 486Z"
            fill="url(#skin)"
          />
          <path d="M332 403C380 368 430 340 487 308C570 264 640 238 714 227" stroke="#888" />
          <path d="M294 509l5 6" stroke="#801010" strokeWidth="2" />
          <path d="M301 641V612" stroke="#0000d8" strokeWidth="2" /><path d="M298 613l3-11 3 11z" fill="#0000b0" />
          <path d="M301 641l24-6" stroke="#00e000" strokeWidth="2" /><path d="M324 631l9 2-8 5z" fill="#009000" />
          <path d="M301 641l20 6" stroke="#f00000" strokeWidth="2" /><path d="M320 644l8 6-10 1z" fill="#b00000" />
          <g fontFamily="Liberation Sans, sans-serif" fontSize="10">
            <text x="298" y="597" fill="#0000ff">Z</text>
            <text x="337" y="636" fill="#00e000">Y</text>
            <text x="329" y="656" fill="#f00000">X</text>
          </g>
        </g>
      </svg>
    </View>
  );
}

/* ---------- results panel ---------- */

const Results = styled.section`
  display: flex;
  flex-direction: column;
  flex: 0 0 277px;
  background: #f0f0f0;
`;
const ResultTools = styled.div`
  display: flex;
  align-items: center;
  flex: 0 0 26px;
  padding-left: 8px;
  background: linear-gradient(#eef1f8, #dde1ea 60%, #cdd1db);
  border-bottom: 1px solid #696969;
`;
const GridArea = styled.div`
  display: flex;
  padding: 2px 2px 0 2px;
`;
const GridTable = styled.table`
  flex: 1;
  table-layout: fixed;
  border-collapse: collapse;
  font-family: ${dlgFont};
  font-size: 13px;
  color: #000;
  white-space: nowrap;
  background: #fff;
  border: 1px solid #8a8a8a;
`;
const Th = styled.th`
  height: 19px;
  padding: 0;
  border: 1px solid #696969;
  background: ${(p) => (p.$hot ? "#0078d7" : "#f0f0f0")};
  color: ${(p) => (p.$hot ? "#fff" : "#000")};
  font-size: 13px;
  font-weight: 400;
  line-height: 16px;
`;
const RowHead = styled(Th)`
  background: ${(p) => (p.$hot ? "#0078d7" : "#e1e1e1")};
  border-color: #777;
`;
const Td = styled.td`
  height: 19px;
  padding: 0 4px;
  border: 1px solid #a8a8b0;
  background: ${(p) => (p.$alt ? "#f6f7fe" : "#fff")};
  text-align: ${(p) => (p.$right ? "right" : "left")};
  line-height: 16px;
`;
const GroupTd = styled(Td)`
  padding: 0 0 0 2px;
  background: #ececec;
  border: 1px dotted #000;
  font-size: 15px;
  font-weight: 700;
`;
const Leaf = styled.span`
  display: flex;
  align-items: center;
  padding-left: 3px;
  &::before {
    content: "";
    width: 11px;
    height: 18px;
    margin-right: 7px;
    border-left: 1px solid #d8d8d8;
    background: linear-gradient(#d8d8d8, #d8d8d8) 0 9px / 100% 1px no-repeat;
  }
`;
const GroupLabel = styled.span`display: flex; align-items: center; gap: 3px;`;
const GroupToggle = styled.button`
  width: 10px;
  height: 10px;
  border: 1px solid #000;
  background: linear-gradient(#000, #000) center / 4px 1px no-repeat;
`;
const SheetBar = styled.div`
  display: flex;
  align-items: stretch;
  height: 18px;
  margin-top: 20px;
  border-top: 1px solid #696969;
  border-bottom: 1px solid #b8b8b8;
  font-family: ${dlgFont};
  font-size: 11px;
  color: #000;
  white-space: nowrap;
`;
const SheetTab = styled.button`
  padding: 0 2px 0 3px;
  margin-bottom: 1px;
  border: solid #696969;
  border-width: 0 1px 1px 0;
  border-radius: 0 0 4px 4px;
  background: ${(p) => (p.$on ? "#fff" : "#ececec")};
`;
const SheetNav = styled.button`
  display: flex;
  align-items: center;
  justify-content: center;
  width: 16px;
  border: 1px solid;
  border-color: #fff #808080 #808080 #fff;
`;
const sums = ["X", "X", "Y", "Y", "Z", "Z"];
const sheets = ["Výsledky - souhrn", "Uzly - deformace", "Linie - podporové síly", "Pruty - lokální deformace", "Pruty - tvar", "Pruty - globální deformace", "Pruty - vnitřní síly", "Pruty - Celková přetvoření průřezu", "Pruty - parametry pro vzpěr"];

function ResultsPanel() {
  return (
    <Results>
      <PanelHeader>4.0 Výsledky - souhrn<Spacer /><Pin /><Cross size={9} color="#666" /></PanelHeader>
      <ResultTools><Tools items="tUprava tRadky tDolu *tPrubeh tKmity | tVlevo tVpravo | *tOblouk1 *tOblouk2 | tSloupce" /></ResultTools>
      <GridArea>
        <GridTable>
          <colgroup>
            <col style={{ width: 54 }} /><col style={{ width: 344 }} /><col style={{ width: 86 }} />
            <col style={{ width: 58 }} /><col style={{ width: 475 }} /><col />
          </colgroup>
          <thead>
            <tr><RowHead rowSpan={2} /><Th $hot>A</Th><Th /><Th /><Th /><Th /></tr>
            <tr><Th>Označení</Th><Th /><Th /><Th /><Th /></tr>
          </thead>
          <tbody>
            <tr>
              <RowHead $hot />
              <GroupTd colSpan={4}><GroupLabel><GroupToggle aria-label="Sbalit" />RF-FORM-FINDING</GroupLabel></GroupTd>
              <RowHead as="td" />
            </tr>
            {sums.map((axis, i) => (
              <tr key={i}>
                <RowHead />
                <Td $alt={i % 2 === 0}><Leaf>{i % 2 ? "Součet podporových sil" : "Součet zatížení"} ve směru {axis}</Leaf></Td>
                <Td $alt={i % 2 === 0} $right>{i === 5 && "-1400.56"}</Td>
                <Td $alt={i % 2 === 0}>{i === 5 && "kN"}</Td>
                <Td $alt={i % 2 === 0}>{i === 5 && "Odchylka:  0.19 %"}</Td>
                <RowHead as="td" />
              </tr>
            ))}
          </tbody>
        </GridTable>
        <ScrollV>
          <ScrollButton aria-label="Nahoru"><Chevron dir="up" /></ScrollButton>
          <ThumbV $len="23px" /><Spacer />
          <ScrollButton aria-label="Dolů"><Chevron /></ScrollButton>
        </ScrollV>
      </GridArea>
      <SheetBar>
        {sheets.map((s, i) => <SheetTab key={s} $on={i === 0}>{s}</SheetTab>)}
        <Spacer />
        <SheetNav aria-label="První"><SheetArrow back end color="#999" /></SheetNav>
        <SheetNav aria-label="Předchozí"><SheetArrow back color="#999" /></SheetNav>
        <SheetNav aria-label="Další"><SheetArrow /></SheetNav>
        <SheetNav aria-label="Poslední"><SheetArrow end /></SheetNav>
      </SheetBar>
    </Results>
  );
}

/* ---------- status bar ---------- */

const StatusBar = styled.footer`
  display: grid;
  grid-template-columns: 607px auto 1fr 87px 74px 74px 91px;
  align-items: center;
  flex: 0 0 22px;
  padding-left: 4px;
  border-top: 1px solid #a4a9b4;
  background: linear-gradient(#c8ccd4, #a0a5b0 45%, #b4b9c4);
  color: #26292f;
`;
const Flags = styled.div`
  display: flex;
  gap: 2px;
  font-family: ${dlgFont};
  font-size: 11px;
`;
const Flag = styled.button`
  height: 19px;
  padding: 0 2px;
  border: 1px solid;
  border-color: ${(p) => (p.$on ? "#111 #fff #fff #111" : "#f4f4f4 #8a8a92 #8a8a92 #f4f4f4")};
`;
const StatusCell = styled.span`
  height: 18px;
  border-left: 1px solid #8e929c;
`;

/* ---------- dialogs ---------- */

const Dialog = styled.section`
  position: absolute;
  left: ${(p) => p.$x}px;
  top: ${(p) => p.$y}px;
  width: ${(p) => p.$w}px;
  display: flex;
  flex-direction: column;
  min-height: ${(p) => p.$h || 0}px;
  border: 1px solid ${(p) => (p.$active ? "#4c4c4c" : "#9a9a9a")};
  background: #f0f0f0;
  box-shadow: 0 2px 14px rgba(0, 0, 0, 0.38);
  font-family: ${dlgFont};
  font-size: 11px;
  color: #000;
`;
const DialogTitle = styled.header`
  display: flex;
  align-items: center;
  justify-content: space-between;
  height: 25px;
  padding: 0 10px 0 3px;
  background: #fff;
  font-family: ${uiFont};
  font-size: 12px;
  color: ${(p) => (p.$dim ? "#9a9a9a" : "#000")};
`;
const CloseButton = styled.button`display: flex;`;
const TabStrip = styled.div`
  display: flex;
  align-items: flex-end;
  height: 27px;
  padding: 0 6px;
  white-space: nowrap;
`;
const Tab = styled.button`
  height: ${(p) => (p.$on ? 21 : 17)}px;
  margin-bottom: ${(p) => (p.$on ? -1 : 0)}px;
  padding: 0 ${(p) => p.$r || 5}px 0 ${(p) => p.$l || 5}px;
  border: 1px solid #d9d9d9;
  border-bottom: 0;
  border-left-width: ${(p) => (p.$on ? 1 : 0)}px;
  background: ${(p) => (p.$on ? "#fff" : "#f0f0f0")};
  z-index: 1;
`;
const Page = styled.div`
  display: grid;
  grid-template-columns: ${(p) => p.$cols};
  gap: ${(p) => p.$gap}px;
  flex: 1;
  margin: 0 ${(p) => p.$side}px 0 6px;
  padding: ${(p) => p.$pad};
  border: 1px solid #d9d9d9;
  background: #fff;
`;
const Column = styled.div`
  display: flex;
  flex-direction: column;
  gap: ${(p) => p.$gap}px;
`;
const Group = styled.section`
  display: flex;
  flex-direction: column;
  min-height: ${(p) => p.$h || 0}px;
`;
const GroupHead = styled.h3`
  display: flex;
  align-items: center;
  justify-content: space-between;
  height: 16px;
  margin: 0;
  padding: 0 3px 0 2px;
  border-right: 1px solid #a6a6ec;
  background: #dce6f4;
  color: #254a6e;
  font-size: 11px;
  font-weight: 400;
  ${(p) => p.$cut && css`clip-path: polygon(0 0, calc(100% - 10px) 0, 100% 10px, 100% 100%, 0 100%);`}
`;
const GroupBody = styled.div`
  flex: 1;
  padding: ${(p) => p.$pad || "4px 4px 5px 1px"};
  border: 1px solid;
  border-color: #dce6f4 #a6a6ec #a6a6ec #dce6f4;
  border-top-width: ${(p) => (p.$bare ? 1 : 0)}px;
  background: #f0f3f9;
`;
const TextField = styled.input`
  flex: 1;
  min-width: 0;
  width: 100%;
  height: 20px;
  padding: 0 3px;
  border: 1px solid #6e6e6e;
  background: ${(p) => (p.readOnly ? "#f0f0f0" : "#fff")};
  display: block;
`;
const Row = styled.div`
  display: flex;
  align-items: center;
  gap: ${(p) => p.$gap || 0}px;
  min-height: ${(p) => p.$h || 20}px;
  margin-bottom: ${(p) => p.$mb || 0}px;
`;
const SquareButton = styled.button`
  display: flex;
  align-items: center;
  justify-content: center;
  width: 25px;
  height: 21px;
  border: 1px solid #adadad;
  background: #e1e1e1;
  ${(p) => p.$marked && css`outline: 4px solid #e8141e; outline-offset: 3px;`}
`;
const FieldLabel = styled.label`width: ${(p) => p.$w}px;`;
const PickBox = styled.span`
  display: flex;
  align-items: center;
  gap: 4px;
  flex: 0 0 194px;
  height: 21px;
  padding: 0 4px 0 2px;
  border: 1px solid #7a7a7a;
  background: #fff;
`;
const Swatch = styled.span`
  width: 14px;
  height: 14px;
  border: 1px solid #333;
  background: ${(p) => p.$c};
`;
const Hint = styled.div`
  flex: 1;
  padding: ${(p) => p.$pad};
  border: 1px solid #9b9b9b;
  border-right: 0;
  border-bottom: 0;
  background: linear-gradient(45deg, #fffffb 0%, #fffaea 50%, #fdf3d6 100%);
  line-height: 14px;
`;
const Choice = styled.label`
  display: flex;
  align-items: center;
  gap: 3px;
  height: ${(p) => p.$h || 22}px;
`;
const Radio = styled.input.attrs({ type: "radio" })`
  width: 13px;
  height: 13px;
  appearance: none;
  border: 1px solid #333;
  border-radius: 50%;
  background: #fff;
  &:checked { background: radial-gradient(circle, #333 0 3px, #fff 4px); }
`;
const Check = styled.input.attrs({ type: "checkbox" })`
  width: 13px;
  height: 13px;
  appearance: none;
  border: 1px solid #333;
  background: #fff;
  &:checked {
    background: #fff url("data:image/svg+xml,%3Csvg xmlns='http://www.w3.org/2000/svg' viewBox='0 0 11 11'%3E%3Cpath d='M2 5.500l2.500 2.500L9.500 2.500' fill='none' stroke='%23333' stroke-width='1.300'/%3E%3C/svg%3E");
  }
`;
const SymbolText = styled.span`
  width: 33px;
  font-family: "DejaVu Sans", sans-serif;
  font-size: 12px;
  sub { font-size: 11px; line-height: 1; }
`;
const Spin = styled.span`
  display: flex;
  align-items: stretch;
  gap: 1px;
  width: 83px;
  height: 20px;
  margin-right: 5px;
  padding: 1px;
  border: 1px solid #7f9db9;
  background: ${(p) => (p.$off ? "#f0f0f0" : "#fff")};
`;
const SpinInput = styled.input`
  flex: 1;
  min-width: 0;
  padding-right: 4px;
  text-align: right;
  outline: none;
`;
const SpinPair = styled.span`display: grid; width: 13px;`;
const SpinButton = styled.button`
  display: flex;
  align-items: center;
  justify-content: center;
  min-width: 9px;
  border: 1px solid #b4b4b4;
  background: #f0f0f0;
`;
const Arrow = styled.svg`margin-left: 13px;`;
const Footer = styled.footer`
  display: flex;
  align-items: center;
  gap: 10px;
  padding: 9px 8px 7px 7px;
`;
const PushButton = styled.button`
  width: 73px;
  height: 21px;
  border: ${(p) => (p.$main ? "2px solid #0078d7" : "1px solid #adadad")};
  background: #e1e1e1;
`;

function SpinField({ label, value, off }) {
  const tone = off ? "#999" : "#000";
  return (
    <Spin $off={off}>
      <SpinInput aria-label={label} defaultValue={value} readOnly={off} />
      <SpinPair>
        <SpinButton aria-label="Zvýšit"><Tri dir="up" color={tone} size={6} /></SpinButton>
        <SpinButton aria-label="Snížit"><Tri color={tone} size={6} /></SpinButton>
      </SpinPair>
      <SpinButton aria-label="Hodnoty"><Tri dir="right" color={tone} size={6} /></SpinButton>
    </Spin>
  );
}

const surfTabs = [["Obecné", 6, 7], ["Podpora / Excentricita", 3, 3], ["Síť prvků", 6, 6], ["Klouby", 6, 4], ["Integrované", 5, 5], ["Osy", 5, 16], ["Rastr", 6, 9], ["Upravit tuhosti", 5, 3]];

function SurfaceDialog() {
  return (
    <Dialog $x={713} $y={141} $w={647} $h={500}>
      <DialogTitle $dim>Upravit plochu<CloseButton aria-label="Zavřít"><Cross color="#777" /></CloseButton></DialogTitle>
      <TabStrip>{surfTabs.map(([t, l, r], i) => <Tab key={t} $on={i === 0} $l={l} $r={r}>{t}</Tab>)}</TabStrip>
      <Page $cols="318px 1fr" $gap={9} $side={8} $pad="9px 8px 9px 9px">
        <Column $gap={9}>
          <Group>
            <GroupHead $cut>Plocha č.</GroupHead>
            <GroupBody><TextField readOnly aria-label="Plocha č." value="1" /></GroupBody>
          </Group>
          <Group>
            <GroupHead $cut>Hraniční linie č.</GroupHead>
            <GroupBody>
              <Row $gap={4}>
                <TextField aria-label="Hraniční linie č." defaultValue="1-8" />
                <SquareButton aria-label="Vybrat"><svg width="16" height="16" viewBox="0 0 16 16"><path d="M2 2l5 5M7 2L2 6" stroke="#d22" strokeWidth="1.500" /><path d="M6 4v10l2-2 2 4 2-1-2-4h3z" fill="#fff" stroke="#333" /></svg></SquareButton>
                <SquareButton aria-label="Orientace"><svg width="16" height="16" viewBox="0 0 16 16" fill="none"><path d="M3 4h7q4 1 4 4t-4 4H3" stroke="#234a98" strokeWidth="3" /><path d="M3 4h7q4 1 4 4t-4 4H3" stroke="#8ab4f0" /><path d="M1 12l4-3v6z" fill="#234a98" /></svg></SquareButton>
              </Row>
            </GroupBody>
          </Group>
          <Group>
            <GroupHead $cut>Hraniční uzly č.</GroupHead>
            <GroupBody><TextField readOnly aria-label="Hraniční uzly č." value="1,4,18; 2,4,11; 2,6,12; 3,6,13; 3,8,14; 8,9,15; 9,10,16; 1,10,17" /></GroupBody>
          </Group>
        </Column>
        <Column $gap={9}>
          <Group>
            <GroupHead $cut>Typ plochy</GroupHead>
            <GroupBody $pad="4px 3px 6px 1px">
              <Row $h={21} $mb={5}>
                <FieldLabel $w={57} htmlFor="geometrie">Geometrie:</FieldLabel>
                <PickBox><Swatch $c="#8c8cff" /><BareSelect id="geometrie"><option>Rovinná</option></BareSelect><ThinChevron /></PickBox>
              </Row>
              <Row $h={21}>
                <FieldLabel $w={57} htmlFor="tuhost">Tuhost:</FieldLabel>
                <PickBox><Swatch $c="#6699ff" /><BareSelect id="tuhost"><option>Standard</option></BareSelect><ThinChevron /></PickBox>
                <Spacer />
                <SquareButton $marked aria-label="Upravit tuhost"><svg width="18" height="16" viewBox="0 0 18 16"><rect x="1" y="1" width="15" height="13" fill="#e8e8e8" stroke="#445" /><path d="M1 1h15v3H1z" fill="#3c4c70" /><path d="M2 9l4-3 8 1 3 2-2 3-8-1z" fill="#b89070" stroke="#543" strokeWidth=".7" /></svg></SquareButton>
              </Row>
            </GroupBody>
          </Group>
          <Hint $pad="1px">Tloušťka plochy 'Konstantní'</Hint>
        </Column>
      </Page>
    </Dialog>
  );
}

/* Membrane patch: four boundary curves, ten cells in each direction. */
const top = [[162, 388], [222, 425], [278, 455], [333, 482], [390, 506], [443, 524], [498, 542], [550, 553], [602, 562], [652, 568], [702, 570]];
const bottom = [[391, 1082], [440, 1036], [491, 990], [545, 945], [594, 897], [650, 850], [705, 797], [760, 748], [817, 698], [875, 645], [931, 596]];
const left = [[162, 388], [193, 465], [223, 541], [252, 613], [277, 685], [300, 755], [323, 823], [344, 890], [363, 957], [379, 1020], [391, 1082]];
const right = [[702, 570], [713, 582], [727, 593], [743, 603], [762, 610], [783, 615], [806, 617], [832, 616], [862, 612], [895, 605], [931, 596]];
const patch = (i, j) => {
  const u = i / 10, v = j / 10;
  return [0, 1].map((k) =>
    (1 - v) * top[i][k] + v * bottom[i][k] + (1 - u) * left[j][k] + u * right[j][k] -
    ((1 - u) * (1 - v) * top[0][k] + u * (1 - v) * top[10][k] + (1 - u) * v * bottom[0][k] + u * v * bottom[10][k])
  );
};
const corners = [[240, 248, 255], [160, 176, 192], [200, 211, 242], [158, 170, 214]];
const shade = (u, v) =>
  `rgb(${[0, 1, 2].map((k) => Math.round((1 - v) * ((1 - u) * corners[0][k] + u * corners[1][k]) + v * ((1 - u) * corners[2][k] + u * corners[3][k]))).join()})`;
const cells = [];
for (let i = 0; i < 10; i++)
  for (let j = 0; j < 10; j++)
    cells.push({ key: `${i}-${j}`, pts: [patch(i, j), patch(i + 1, j), patch(i + 1, j + 1), patch(i, j + 1)].map((p) => p.map(Math.round).join()).join(" "), fill: shade((i + 0.5) / 10, (j + 0.5) / 10) });

const redForces = [[490, 738, 523, 705], [515, 756, 545, 722], [540, 773, 569, 739], [565, 790, 593, 757], [386, 848, 356, 880], [410, 866, 380, 895], [435, 882, 404, 912], [460, 897, 428, 930]];
const greenForces = [[386, 848, 347, 817], [410, 818, 372, 792], [436, 792, 398, 764], [462, 764, 425, 737], [490, 738, 450, 709], [460, 897, 500, 927], [485, 872, 525, 899], [512, 846, 551, 872], [540, 820, 577, 845], [565, 790, 603, 818]];
const Forces = ({ list, color, id }) => list.map(([a, b, c, d]) => <path key={`${a}${b}${c}`} d={`M${a} ${b}L${c} ${d}`} stroke={color} strokeWidth="3" markerEnd={`url(#${id})`} />);
const Head = ({ id, color, size = 16 }) => (
  <marker id={id} markerUnits="userSpaceOnUse" viewBox="0 0 10 10" refX="9" refY="5" markerWidth={size} markerHeight={size} orient="auto"><path d="M0 0L10 5 0 10z" fill={color} /></marker>
);
const Sym = ({ x, y, a, b, color }) => (
  <text x={x} y={y} fontSize="36" fill={color} fontFamily="Noto Sans, sans-serif">{a}<tspan dy="8" fontSize="30">{b}</tspan></text>
);

function MembraneDrawing() {
  return (
    <svg width="343" height="440" viewBox="24 129 1029 1320" fill="none" aria-label="Membrána">
      <defs>
        <Head id="hr" color="#e01b24" /><Head id="hg" color="#089a48" />
        <Head id="hR" color="#e01b24" size={24} /><Head id="hG" color="#089a48" size={22} /><Head id="hB" color="#3a2c8c" size={22} />
      </defs>
      {cells.map((c) => <polygon key={c.key} points={c.pts} fill={c.fill} stroke="#8b94a8" strokeWidth="2" />)}
      <polygon points="386,848 490,738 565,790 460,897" fill="#e9eceb" stroke="#222" strokeWidth="3" />
      <Forces list={redForces} color="#e01b24" id="hr" />
      <Forces list={greenForces} color="#089a48" id="hg" />
      <path d="M523 707L592 757M356 880L428 930" stroke="#e01b24" strokeWidth="3" />
      <path d="M347 817L450 709M500 927L603 818" stroke="#089a48" strokeWidth="3" />
      <path d="M474 818L522 769" stroke="#e01b24" strokeWidth="5" markerEnd="url(#hR)" />
      <path d="M474 818L520 851" stroke="#089a48" strokeWidth="5" markerEnd="url(#hG)" />
      <path d="M474 818L491 870" stroke="#3a2c8c" strokeWidth="5" markerEnd="url(#hB)" />
      <circle cx="474" cy="818" r="8" fill="#b04080" />
      <g fontFamily="Noto Sans, sans-serif" fontWeight="bold" fontSize="34">
        <text x="489" y="764" fill="#e01b24">x</text><text x="523" y="838" fill="#089a48">y</text><text x="453" y="888" fill="#3a2c8c">z</text>
      </g>
      <Sym x={570} y={717} a="n" b="x" color="#e01b24" /><Sym x={337} y={746} a="n" b="y" color="#089a48" />
      <Sym x={585} y={891} a="n" b="y" color="#089a48" /><Sym x={360} y={936} a="n" b="x" color="#e01b24" />
    </svg>
  );
}

const Pair = styled.div`display: grid; grid-template-columns: 217px 1fr; gap: 8px;`;
const SubTitle = styled.span`font-weight: 400;`;
const HintText = styled.p`margin: 0; padding-left: 7px;`;

function StiffnessDialog() {
  return (
    <Dialog $x={485} $y={365} $w={886} $active>
      <DialogTitle>Upravit tuhost plochy - Standard<CloseButton aria-label="Zavřít"><Cross /></CloseButton></DialogTitle>
      <TabStrip><Tab $on $l={6} $r={7}>Form-finding</Tab></TabStrip>
      <Page $cols="495px 1fr" $gap={7} $side={8} $pad="9px 10px 9px 11px">
        <Column $gap={6}>
          <Group $h={38}>
            <GroupBody $bare $pad="7px 2px"><Choice><Check defaultChecked />Aktivovat</Choice></GroupBody>
          </Group>
          <Pair>
            <Group $h={96}>
              <GroupHead $cut>Metoda výpočtu</GroupHead>
              <GroupBody $pad="7px 2px">
                <Choice $h={21}><Radio name="metoda" defaultChecked />Standardní</Choice>
                <Choice $h={21}><Radio name="metoda" />Průmět</Choice>
              </GroupBody>
            </Group>
            <Group><GroupBody $bare /></Group>
          </Pair>
          <Group $h={259}>
            <GroupHead>Předpětí<SubTitle>Pouze izotropní (pro danou orientaci os)</SubTitle></GroupHead>
            <GroupBody $pad="11px 2px">
              <Row $h={22}>Definovat pomocí</Row>
              <Choice><Radio name="pomoci" defaultChecked />Síly</Choice>
              <Row $h={22} $mb={6}><Choice><Radio name="pomoci" />Napětí</Choice></Row>
              <Row $h={22}>Síly podélně</Row>
              <Row $mb={4}>
                <FieldLabel as="span" $w={138}>- osnova (osa x)</FieldLabel>
                <SymbolText>n<sub>x</sub>:</SymbolText>
                <SpinField label="nx" value="-30.0" />[kN/m]
                <Arrow width="95" height="20" viewBox="0 0 95 20"><path d="M22 10H93" stroke="#ee1c25" strokeWidth="4" strokeLinecap="round" /><path d="M0 10L23 0V20z" fill="#ee1c25" /></Arrow>
              </Row>
              <Row>
                <FieldLabel as="span" $w={138}>- útek (osa y)</FieldLabel>
                <SymbolText>n<sub>y</sub>:</SymbolText>
                <SpinField label="ny" value="-30.0" off />[kN/m]
              </Row>
            </GroupBody>
          </Group>
          <Group $h={69}>
            <GroupHead $cut>Zatížení</GroupHead>
            <GroupBody $pad="17px 2px 15px">
              <Row>
                <FieldLabel as="span" $w={142}>Vnitřní tlak:</FieldLabel>
                <SymbolText>p<sub>p</sub>:</SymbolText>
                <SpinField label="pp" value="0.0" />[Pa]
              </Row>
            </GroupBody>
          </Group>
        </Column>
        <Hint $pad="6px 0 0 0">
          <HintText>Metoda výpočtu - Standardní<br />Předpětí - Pouze izotropní (pro danou orientaci os) - Síly</HintText>
          <MembraneDrawing />
        </Hint>
      </Page>
      <Footer>
        <SquareButton aria-label="Nápověda"><svg width="16" height="16" viewBox="0 0 16 16"><circle cx="8" cy="7" r="6.500" fill="#e8ecf4" stroke="#778" /><path d="M3 11l-1 4 5-2z" fill="#99a" /><path d="M5.500 5.500Q6 3 8.500 3T11 5.500Q11 7 9 8L8 9.500M7.500 11v1.500" fill="none" stroke="#2a3a80" strokeWidth="2" /></svg></SquareButton>
        <SquareButton aria-label="Jednotky"><svg width="18" height="16" viewBox="0 0 18 16"><rect x="1" width="16" height="5" fill="#58b858" /><path d="M4 2v3M7 2v3M10 2v3M13 2v3" stroke="#fff" /><path d="M9 14.500h8" stroke="#36c" /><text x="0" y="14" fontSize="10" fontWeight="bold" fontStyle="italic" fill="#222" fontFamily="Liberation Serif, serif">0.00</text></svg></SquareButton>
        <Spacer />
        <PushButton $main>OK</PushButton>
        <PushButton>Storno</PushButton>
      </Footer>
    </Dialog>
  );
}

/* ---------- page ---------- */

const menu = [["", "S", "oubor"], ["Úpr", "a", "vy"], ["", "Z", "obrazit"], ["Vlož", "i", "t"], ["V", "ý", "počet"], ["Výsled", "k", "y"], ["Nástro", "j", "e"], ["", "T", "abulka"], ["Nasta", "v", "ení"], ["Pří", "d", "avné moduly"], ["", "O", "kno"], ["", "N", "ápověda"]];

export default function App() {
  return (
    <>
      <Global />
      <Frame>
        <TitleBar>
          <svg width="17" height="17" viewBox="0 0 17 17" fill="none"><Poly d="M4 5l6-4 6 3v7l-6 5-5-3z" f="#4a6a98" s="#234" /><Line d="M10 1v6l6-2M10 7v8" c="#89a8d0" /><text x="0" y="15" fontSize="12" fontWeight="bold" fill="#f0c820" stroke="#6b5a10" strokeWidth=".4" fontFamily="Liberation Sans">5</text></svg>
          <TitleText>RFEM 5.24.02 x64 - [ff3]</TitleText>
          <Spacer />
          <WinButton aria-label="Minimalizovat"><svg width="11" height="11"><path d="M0 5.500h11" stroke="#777" /></svg></WinButton>
          <WinButton aria-label="Maximalizovat"><svg width="11" height="11"><path d="M.5.5h10v10H.5z" fill="none" stroke="#777" /></svg></WinButton>
          <WinButton aria-label="Zavřít"><Cross color="#777" /></WinButton>
        </TitleBar>
        <MenuBar>
          <Grip $w={8} />
          <MenuLogo><svg width="16" height="13" viewBox="0 0 16 13"><rect width="16" height="13" fill="#1c2c68" /><path d="M0 9h16M5 3v9M5 3L0 8M5 3l6 6M10 4l6 5" stroke="#fff" fill="none" /></svg></MenuLogo>
          {menu.map(([a, k, b], i) => <MenuItem key={i}>{a}<u>{k}</u>{b}</MenuItem>)}
          <Spacer />
          <MdiButton aria-label="Minimalizovat okno"><svg width="9" height="9"><path d="M1 8h6" stroke="#666" strokeWidth="2" /></svg></MdiButton>
          <MdiButton aria-label="Obnovit okno"><svg width="9" height="9"><path d="M2.500 1.500h6v4M.5 3.500h6v4h-6z" fill="none" stroke="#666" /></svg></MdiButton>
          <MdiButton aria-label="Zavřít okno"><Cross size={8} color="#666" /></MdiButton>
        </MenuBar>
        <Toolbar groups={row1} />
        <Toolbar groups={row2} />
        <Workspace>
          <NavigatorPanel />
          <RightColumn>
            <ModelView />
            <ResultsPanel />
          </RightColumn>
        </Workspace>
        <StatusBar>
          Hotovo
          <Flags>
            <Flag $on>UCHOP</Flag><Flag>RASTR</Flag><Flag $on>KARTEZ</Flag><Flag $on>OUCHOP</Flag><Flag $on>VLINIE</Flag><Flag $on>DXF</Flag>
          </Flags>
          <StatusCell /><StatusCell /><StatusCell /><StatusCell /><StatusCell />
        </StatusBar>
        <SurfaceDialog />
        <StiffnessDialog />
      </Frame>
    </>
  );
}
